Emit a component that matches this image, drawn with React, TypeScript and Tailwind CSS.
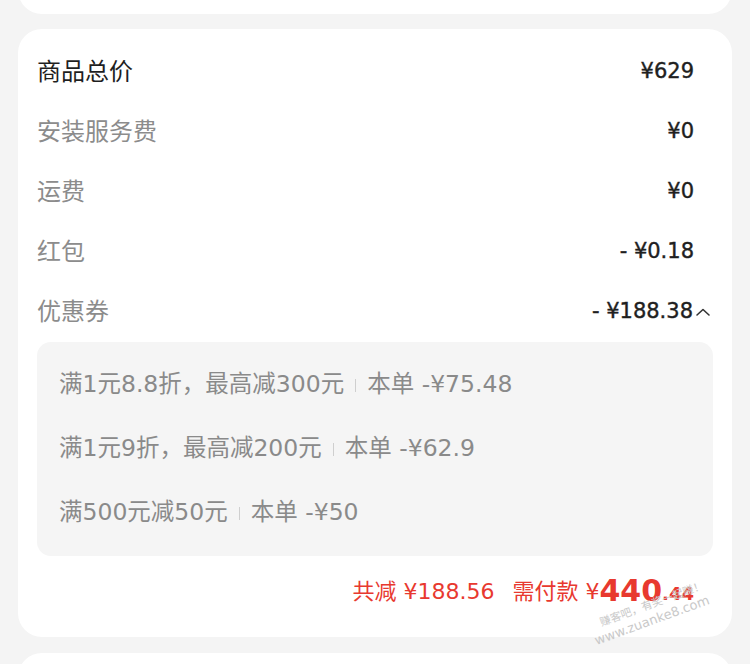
import { ReactNode } from "react";

const font = { fontFamily: "'DejaVu Sans', 'Noto Sans CJK SC', sans-serif" };

const Row = ({ label, value, dark, chevron }: { label: string; value: string; dark?: boolean; chevron?: boolean }) => (
  <div className="flex h-[60px] items-center justify-between">
    <span className={`text-[24px] ${dark ? "text-[#1f1f1f]" : "text-[#8c8c8c]"}`}>{label}</span>
    <div className={`flex items-center ${chevron ? "" : "pr-[19px]"}`}>
      <span className="text-[21px] text-[#1f1f1f] [-webkit-text-stroke:0.4px_#1f1f1f]">{value}</span>
      {chevron && (
        <svg width="19" height="14" viewBox="0 0 19 14" className="ml-[1px]">
          <path d="M3 10 L9 4.5 L15 10" fill="none" stroke="#333" strokeWidth="1.6" strokeLinecap="round" strokeLinejoin="round" />
        </svg>
      )}
    </div>
  </div>
);

const Coupon = ({ rule, amount }: { rule: string; amount: string }) => (
  <div className="flex h-16 items-center text-[23.5px] text-[#8a8a8a]">
    <span>{rule}</span>
    <span className="mx-[11px] h-[13px] w-px bg-[#cfcfcf]" />
    <span>本单 -¥{amount}</span>
  </div>
);

const Card = ({ children, className }: { children?: ReactNode; className?: string }) => (
  <div className={`mx-[18px] rounded-[24px] bg-white ${className ?? ""}`}>{children}</div>
);

export default function App() {
  return (
    <div className="h-[664px] w-[750px] overflow-hidden bg-[#f4f4f4]" style={font}>
      <div className="-mt-[40px] h-[54px]">
        <Card className="h-[54px]" />
      </div>
      <div className="h-[15px]" />
      <Card className="relative px-[19px] pb-[11px] pt-[13px]">
        <Row label="商品总价" value="¥629" dark />
        <Row label="安装服务费" value="¥0" />
        <Row label="运费" value="¥0" />
        <Row label="红包" value="- ¥0.18" />
        <Row label="优惠券" value="- ¥188.38" chevron />
        <div className="rounded-[14px] bg-[#f5f5f5] px-[22px] py-[11px]">
          <Coupon rule="满1元8.8折，最高减300元" amount="75.48" />
          <Coupon rule="满1元9折，最高减200元" amount="62.9" />
          <Coupon rule="满500元减50元" amount="50" />
        </div>
        <div className="flex h-[70px] items-center justify-end pr-[19px] text-[#e8392f]">
          <span className="text-[22px]">共减 ¥188.56</span>
          <span className="ml-[18px] text-[22px]">需付款 ¥</span>
          <span className="text-[30px] font-bold leading-none">440</span>
          <span className="self-center pt-[6px] text-[18px] font-bold leading-none">.44</span>
        </div>
        <div className="pointer-events-none absolute bottom-[8px] right-[22px] -rotate-[20deg] text-right leading-tight text-[#c9c9c9]">
          <div className="text-[11px]">赚客吧，有奖一起赚！</div>
          <div className="text-[13px]">www.zuanke8.com</div>
        </div>
      </Card>
      <div className="h-[16px]" />
      <Card className="h-[60px]" />
    </div>
  );
}
